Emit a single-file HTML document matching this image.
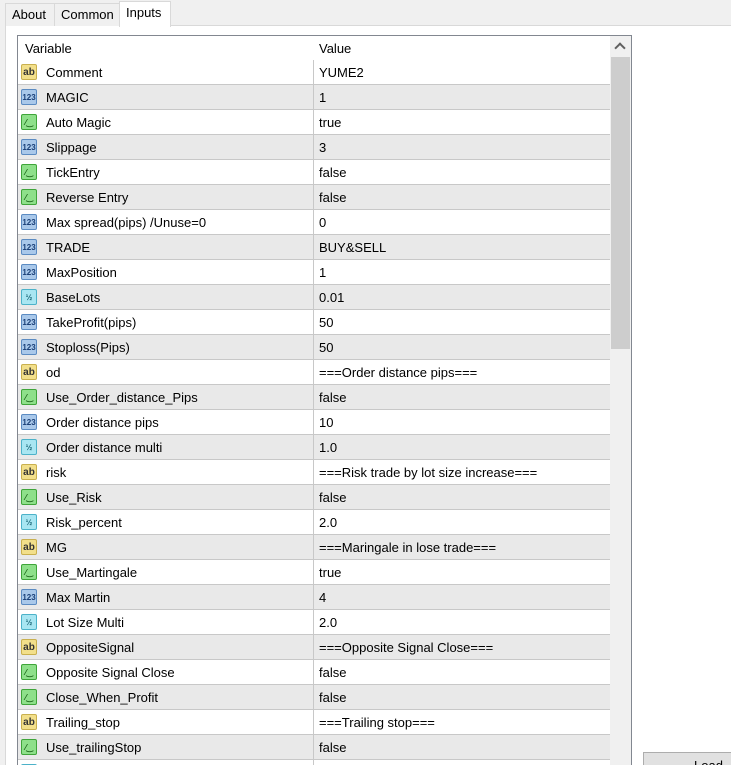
<!DOCTYPE html>
<html style="overflow:hidden;height:765px"><head><style>
body{margin:0;width:731px;height:765px;overflow:hidden;background:#f0f0f0;font-family:"Liberation Sans",Arial,sans-serif;font-size:13px;color:#000;position:relative}
.tab{position:absolute;top:3px;height:22px;line-height:22px;border:1px solid #d9d9d9;border-bottom:none;background:#f0f0f0;padding:0 6px;font-size:13px}
.panel{position:absolute;left:5px;top:25px;width:726px;height:740px;background:#fff;border-left:1px solid #d9d9d9;border-top:1px solid #d9d9d9}
.list{position:absolute;left:17px;top:35px;width:613px;height:735px;border:1px solid #828790;border-bottom:none;background:#fff;overflow:hidden}
.hdr{position:absolute;left:0;top:0;width:592px;height:24px;background:#fff}
.hdr span{position:absolute;top:5px}
.row{position:absolute;left:0;width:592px;height:24px;border-bottom:1px solid #c8c8c8}
.row.g{background:#e9e9e9}
.row .n{position:absolute;left:28px;top:5px}
.row .v{position:absolute;left:301px;top:5px}
.row .d{position:absolute;left:295px;top:0;width:1px;height:25px;background:#c8c8c8}
.ic{position:absolute;left:3px;top:4px;width:16px;height:16px;border-radius:2px;font-size:8px;font-weight:bold;text-align:center;line-height:16px;box-sizing:border-box}
.ab{background:#f2df8a;border:1px solid #c9b04f;color:#333;font-size:10px}
.n1{background:#a9c8ea;border:1px solid #5b8bc2;color:#1a3f77}
.b{background:#8ee08a;border:1px solid #3fa53a;color:#155d12}
.h{background:#a8e6f2;border:1px solid #4cb2c9;color:#1b6777}
.sb{position:absolute;left:592px;top:0;width:21px;height:735px;background:#f0f0f0}
.thumb{position:absolute;left:1px;top:21px;width:19px;height:292px;background:#cdcdcd}
</style></head><body>
<div class="panel"></div>
<div class="tab" style="left:5px;width:39px">About</div>
<div class="tab" style="left:54px;width:53px">Common</div>
<div class="tab" style="left:119px;top:1px;height:25px;background:#fff;width:38px;line-height:22px">Inputs</div>
<div class="list">
<div class="hdr"><span style="left:7px">Variable</span><span style="left:301px">Value</span></div>
<div id="rows"></div>
<div class="sb"><div style="position:absolute;left:6px;top:8px;width:6px;height:6px;border-left:2px solid #606060;border-top:2px solid #606060;transform:rotate(45deg)"></div><div class="thumb"></div></div>
</div>
<div style="position:absolute;left:643px;top:752px;width:95px;height:20px;background:#e1e1e1;border:1px solid #adadad;font-size:13px;padding-left:50px;line-height:26px">Load</div>
<script>
var d=[["ab","Comment","YUME2"],["n1","MAGIC","1"],["b","Auto Magic","true"],["n1","Slippage","3"],["b","TickEntry","false"],["b","Reverse Entry","false"],["n1","Max spread(pips) /Unuse=0","0"],["n1","TRADE","BUY&amp;SELL"],["n1","MaxPosition","1"],["h","BaseLots","0.01"],["n1","TakeProfit(pips)","50"],["n1","Stoploss(Pips)","50"],["ab","od","===Order distance pips==="],["b","Use_Order_distance_Pips","false"],["n1","Order distance pips","10"],["h","Order distance multi","1.0"],["ab","risk","===Risk trade by lot size increase==="],["b","Use_Risk","false"],["h","Risk_percent","2.0"],["ab","MG","===Maringale in lose trade==="],["b","Use_Martingale","true"],["n1","Max Martin","4"],["h","Lot Size Multi","2.0"],["ab","OppositeSignal","===Opposite Signal Close==="],["b","Opposite Signal Close","false"],["b","Close_When_Profit","false"],["ab","Trailing_stop","===Trailing stop==="],["b","Use_trailingStop","false"],["h","",""]];
var lab={ab:"ab",n1:"123",b:"⁄‿",h:"½"};
var s="";d.forEach(function(r,i){s+='<div class="row'+(i%2?' g':'')+'" style="top:'+(24+i*25)+'px"><div class="ic '+r[0]+'">'+lab[r[0]]+'</div><span class="n">'+r[1]+'</span><div class="d"></div><span class="v">'+r[2]+'</span></div>';});
document.getElementById("rows").innerHTML=s;
</script>
</body></html>
